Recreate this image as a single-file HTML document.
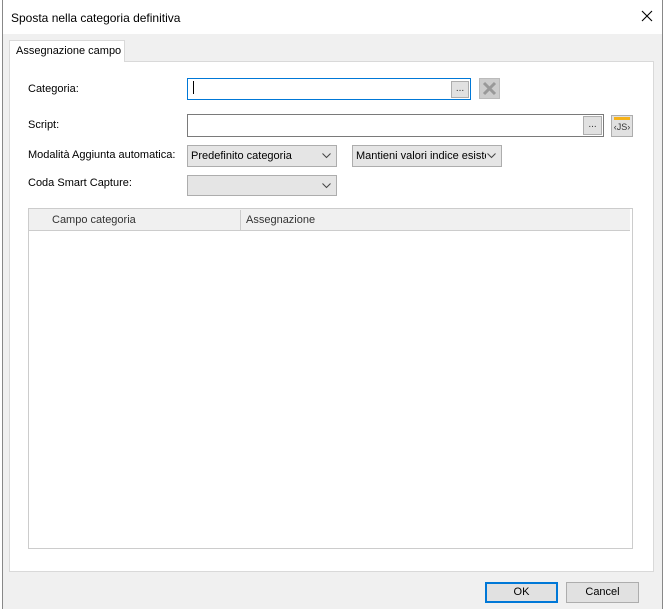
<!DOCTYPE html>
<html><head><meta charset="utf-8"><style>
*{box-sizing:border-box;margin:0;padding:0}
body{width:665px;height:609px;background:#fff;font-family:"Liberation Sans",sans-serif;font-size:11px;color:#000;position:relative;overflow:hidden}
.a{position:absolute}
.dlg{left:2px;top:0;width:661px;height:609px;background:#f0f0f0;border-left:1px solid #888;border-right:1px solid #888}
.title{left:3px;top:0;width:659px;height:34px;background:#fff}
.lbl{position:absolute;font-size:11px;white-space:nowrap}
.inp{position:absolute;background:#fff;border:1px solid #7a7a7a}
.btn{position:absolute;background:#e1e1e1;border:1px solid #adadad;font-size:10px;text-align:center;color:#333}
.cmb{position:absolute;background:#e5e5e5;border:1px solid #adadad;padding:4px 0 0 3px;font-size:11px;overflow:hidden;white-space:nowrap}
.cmb svg{position:absolute;right:5px;top:7px}
</style></head><body>
<div class="a dlg"></div>
<div class="a title"></div>
<div class="a" style="left:11px;top:11px;font-size:12px">Sposta nella categoria definitiva</div>
<svg class="a" style="left:641px;top:10px" width="12" height="12"><path d="M1 1L11 11M11 1L1 11" stroke="#000" stroke-width="1.1"/></svg>
<div class="a" style="left:9px;top:61px;width:645px;height:511px;background:#fff;border:1px solid #d9d9d9"></div>
<div class="a" style="left:9px;top:40px;width:116px;height:22px;background:#fff;border:1px solid #d9d9d9;border-bottom:none;padding:4px 0 0 6px;font-size:11px;white-space:nowrap">Assegnazione campo</div>
<div class="lbl" style="left:28px;top:83px">Categoria:</div>
<div class="inp" style="left:187px;top:78px;width:284px;height:22px;border-color:#0078d7"></div>
<div class="a" style="left:193px;top:81px;width:1px;height:13px;background:#000"></div>
<div class="btn" style="left:451px;top:81px;width:18px;height:17px;line-height:14px">...</div>
<div class="a" style="left:479px;top:78px;width:21px;height:21px;background:#ccc;border:1px solid #bbb"></div>
<svg class="a" style="left:481px;top:80px" width="17" height="17"><path d="M3 3L14 14M14 3L3 14" stroke="#999" stroke-width="3"/></svg>
<div class="lbl" style="left:28px;top:119px">Script:</div>
<div class="inp" style="left:187px;top:114px;width:417px;height:23px"></div>
<div class="btn" style="left:583px;top:116px;width:19px;height:19px;line-height:16px">...</div>
<div class="btn" style="left:611px;top:115px;width:22px;height:22px;font-size:9px;line-height:22px">‹JS›</div>
<div class="a" style="left:614px;top:117px;width:16px;height:3px;background:#f5b21a"></div>
<div class="lbl" style="left:28px;top:149px">Modalità Aggiunta automatica:</div>
<div class="cmb" style="left:187px;top:145px;width:150px;height:22px">Predefinito categoria<svg width="9" height="6"><path d="M.5 .5L4.5 4.5L8.5 .5" stroke="#444" fill="none"/></svg></div>
<div class="cmb" style="left:352px;top:145px;width:150px;height:22px"><span style="display:inline-block;width:130px;overflow:hidden">Mantieni valori indice esistenti</span><svg width="9" height="6"><path d="M.5 .5L4.5 4.5L8.5 .5" stroke="#444" fill="none"/></svg></div>
<div class="lbl" style="left:28px;top:177px">Coda Smart Capture:</div>
<div class="cmb" style="left:187px;top:175px;width:150px;height:21px"><svg width="9" height="6"><path d="M.5 .5L4.5 4.5L8.5 .5" stroke="#444" fill="none"/></svg></div>
<div class="a" style="left:28px;top:208px;width:605px;height:341px;background:#fff;border:1px solid #ccc"></div>
<div class="a" style="left:29px;top:209px;width:601px;height:22px;background:#f0f0f0;border-bottom:1px solid #ccc"></div>
<div class="a" style="left:240px;top:210px;width:1px;height:20px;background:#ccc"></div>
<div class="lbl" style="left:52px;top:214px;color:#333">Campo categoria</div>
<div class="lbl" style="left:246px;top:214px;color:#333">Assegnazione</div>
<div class="a" style="left:485px;top:582px;width:73px;height:21px;background:#e1e1e1;border:2px solid #0078d7;text-align:center;line-height:17px">OK</div>
<div class="a" style="left:566px;top:582px;width:73px;height:21px;background:#e1e1e1;border:1px solid #adadad;text-align:center;line-height:19px">Cancel</div>
</body></html>
